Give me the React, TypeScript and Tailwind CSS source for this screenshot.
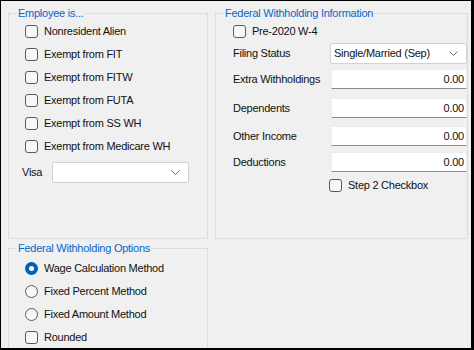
import React from 'react';

function Check({ label }: { label: string }) {
  return (
    <div className="flex items-center h-[23px]">
      <span className="w-[13px] h-[13px] rounded-[3px] border border-[#5a5a5a] bg-[#f7f7f7] shrink-0" />
      <span className="ml-[6px] whitespace-nowrap">{label}</span>
    </div>
  );
}

function Radio({ label, checked }: { label: string; checked?: boolean }) {
  return (
    <div className="flex items-center h-[23px]">
      {checked ? (
        <span className="w-[13px] h-[13px] rounded-full bg-[#005fb8] flex items-center justify-center shrink-0">
          <span className="w-[5px] h-[5px] rounded-full bg-white" />
        </span>
      ) : (
        <span className="w-[13px] h-[13px] rounded-full border border-[#5a5a5a] bg-[#f7f7f7] shrink-0" />
      )}
      <span className="ml-[6px] whitespace-nowrap">{label}</span>
    </div>
  );
}

function Chevron() {
  return (
    <svg width="9" height="5" viewBox="0 0 9 5" className="shrink-0">
      <path d="M0.5 0.5 L4.5 4.5 L8.5 0.5" fill="none" stroke="#6b6b6b" strokeWidth="1" />
    </svg>
  );
}

function Combo({ value, width }: { value?: string; width: string }) {
  return (
    <div className={`${width} h-[21px] bg-white border border-[#d2d2d2] rounded-[2px] flex items-center pl-[3px] pr-[8px]`}>
      <span className="flex-1 whitespace-nowrap">{value}</span>
      <Chevron />
    </div>
  );
}

function Amount({ value }: { value: string }) {
  return (
    <div className="w-[136px] h-[20px] bg-white border border-[#ececec] border-b-[#8d8d8d] flex items-center justify-end pr-[2px]">
      {value}
    </div>
  );
}

function GroupBox({ title, className, children }: { title: string; className: string; children: React.ReactNode }) {
  return (
    <div className={`relative border border-[#dcdcdc] ${className}`}>
      <span className="absolute left-[8px] -top-[8px] px-[1px] bg-[#f0f0f0] text-[#0a64c8] leading-[14px] whitespace-nowrap">
        {title}
      </span>
      {children}
    </div>
  );
}

function FieldRow({ label, children, className }: { label: string; children: React.ReactNode; className: string }) {
  return (
    <div className={`flex items-center justify-between pl-[17px] ${className}`}>
      <span className="whitespace-nowrap">{label}</span>
      {children}
    </div>
  );
}

export default function App() {
  return (
    <div className="w-[474px] h-[350px] bg-[#f0f0f0] border-l border-t border-r-[3px] border-b-[2px] border-black overflow-hidden font-['Liberation_Sans',Arial,sans-serif] text-[11px] tracking-[-0.25px] text-[#111]">
      <div className="flex gap-[7px] pl-[7px] pt-[12px]">
        <GroupBox title="Employee is..." className="w-[200px] h-[226px]">
          <div className="pl-[16px] pt-[6px]">
            <Check label="Nonresident Alien" />
            <Check label="Exempt from FIT" />
            <Check label="Exempt from FITW" />
            <Check label="Exempt from FUTA" />
            <Check label="Exempt from SS WH" />
            <Check label="Exempt from Medicare WH" />
          </div>
          <div className="flex items-center pl-[13px] mt-[4px]">
            <span className="w-[30px]">Visa</span>
            <Combo width="w-[137px]" />
          </div>
        </GroupBox>

        <GroupBox title="Federal Withholding Information" className="w-[253px] h-[226px]">
          <div className="pl-[17px] pt-[6px]">
            <Check label="Pre-2020 W-4" />
          </div>
          <FieldRow label="Filing Status" className="">
            <Combo value="Single/Married (Sep)" width="w-[137px]" />
          </FieldRow>
          <FieldRow label="Extra Withholdings" className="mt-[5px]">
            <Amount value="0.00" />
          </FieldRow>
          <FieldRow label="Dependents" className="mt-[9px]">
            <Amount value="0.00" />
          </FieldRow>
          <FieldRow label="Other Income" className="mt-[8px]">
            <Amount value="0.00" />
          </FieldRow>
          <FieldRow label="Deductions" className="mt-[6px]">
            <Amount value="0.00" />
          </FieldRow>
          <div className="pl-[113px] mt-[2px]">
            <Check label="Step 2 Checkbox" />
          </div>
        </GroupBox>
      </div>

      <div className="pl-[7px] pt-[9px]">
        <GroupBox title="Federal Withholding Options" className="w-[200px] h-[110px]">
          <div className="pl-[16px] pt-[8px]">
            <Radio label="Wage Calculation Method" checked />
            <Radio label="Fixed Percent Method" />
            <Radio label="Fixed Amount Method" />
            <Check label="Rounded" />
          </div>
        </GroupBox>
      </div>
    </div>
  );
}
